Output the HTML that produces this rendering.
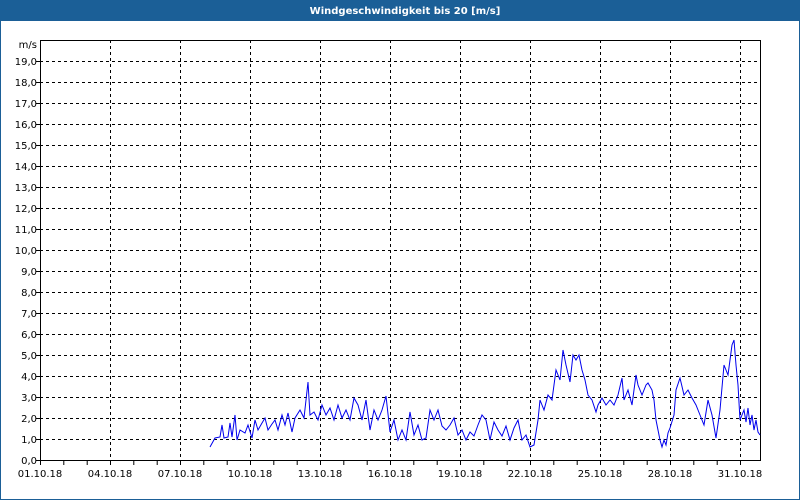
<!DOCTYPE html>
<html><head><meta charset="utf-8"><style>
html,body{margin:0;padding:0;background:#fff}
svg{display:block}
text{font-family:"DejaVu Sans","Liberation Sans",sans-serif;font-size:10px;fill:#000}
</style></head><body>
<svg width="800" height="500" xmlns="http://www.w3.org/2000/svg">
<rect x="0" y="0" width="800" height="500" fill="#fff"/>
<rect x="0" y="0" width="800" height="21" fill="#1b5f97"/>
<rect x="0.5" y="20.5" width="799" height="479" fill="none" stroke="#1b5f97"/>
<text x="405" y="14" text-anchor="middle" style="fill:#fff;font-weight:bold;font-size:10px">Windgeschwindigkeit bis 20 [m/s]</text>
<g stroke="#000" stroke-dasharray="3,3" stroke-width="1">
<path d="M40 61.5H760M40 82.5H760M40 103.5H760M40 124.5H760M40 145.5H760M40 166.5H760M40 187.5H760M40 208.5H760M40 229.5H760M40 250.5H760M40 271.5H760M40 292.5H760M40 313.5H760M40 334.5H760M40 355.5H760M40 376.5H760M40 397.5H760M40 418.5H760M40 439.5H760"/>
<path d="M110.5 40V460M180.5 40V460M250.5 40V460M320.5 40V460M390.5 40V460M460.5 40V460M530.5 40V460M600.5 40V460M670.5 40V460M740.5 40V460"/>
</g>
<rect x="40.5" y="40.5" width="720" height="420" fill="none" stroke="#000"/>
<g stroke="#000">
<path d="M40.5 461V465M63.8 461V465M87.2 461V465M110.5 461V465M133.8 461V465M157.2 461V465M180.5 461V465M203.8 461V465M227.2 461V465M250.5 461V465M273.8 461V465M297.2 461V465M320.5 461V465M343.8 461V465M367.2 461V465M390.5 461V465M413.8 461V465M437.2 461V465M460.5 461V465M483.8 461V465M507.2 461V465M530.5 461V465M553.8 461V465M577.2 461V465M600.5 461V465M623.8 461V465M647.2 461V465M670.5 461V465M693.8 461V465M717.2 461V465M740.5 461V465"/>
<path d="M36 61.5H40M36 82.5H40M36 103.5H40M36 124.5H40M36 145.5H40M36 166.5H40M36 187.5H40M36 208.5H40M36 229.5H40M36 250.5H40M36 271.5H40M36 292.5H40M36 313.5H40M36 334.5H40M36 355.5H40M36 376.5H40M36 397.5H40M36 418.5H40M36 439.5H40M36 460.5H40"/>
</g>
<g text-anchor="end">
<text x="37" y="48">m/s</text>
<text x="37" y="65">19,0</text><text x="37" y="86">18,0</text><text x="37" y="107">17,0</text><text x="37" y="128">16,0</text><text x="37" y="149">15,0</text><text x="37" y="170">14,0</text><text x="37" y="191">13,0</text><text x="37" y="212">12,0</text><text x="37" y="233">11,0</text><text x="37" y="254">10,0</text><text x="37" y="275">9,0</text><text x="37" y="296">8,0</text><text x="37" y="317">7,0</text><text x="37" y="338">6,0</text><text x="37" y="359">5,0</text><text x="37" y="380">4,0</text><text x="37" y="401">3,0</text><text x="37" y="422">2,0</text><text x="37" y="443">1,0</text><text x="37" y="464">0,0</text>
</g>
<g text-anchor="middle">
<text x="40" y="477">01.10.18</text><text x="110" y="477">04.10.18</text><text x="180" y="477">07.10.18</text><text x="250" y="477">10.10.18</text><text x="320" y="477">13.10.18</text><text x="390" y="477">16.10.18</text><text x="460" y="477">19.10.18</text><text x="530" y="477">22.10.18</text><text x="600" y="477">25.10.18</text><text x="670" y="477">28.10.18</text><text x="740" y="477">31.10.18</text>
</g>
<polyline fill="none" stroke="#0000ee" stroke-width="1" points="210,447 215,438 220,437 222,425 224,438 228,437 230,423 232,437 235,415 237,440 240,430 245,433 248,425 252,438 255,420 258,430 262,423 265,418 268,430 272,424 275,420 278,430 282,415 285,425 288,413 292,432 295,418 300,410 304,418 308,382 310,415 314,412 318,420 322,405 326,415 330,408 334,420 338,405 342,418 346,410 350,420 354,398 358,405 362,420 366,400 370,430 374,410 378,420 382,410 386,396 390,432 394,420 398,440 402,430 406,440 410,412 414,435 418,425 422,440 426,438 430,410 434,420 438,410 442,426 446,430 450,425 454,418 458,435 462,430 466,440 470,432 474,436 478,425 482,415 486,420 490,440 494,422 498,430 502,436 506,426 510,440 514,428 518,420 522,440 526,435 530,447 534,445 538,420 540,400 544,410 548,395 552,400 556,370 560,380 563,350 566,365 570,382 573,355 576,360 579,355 582,370 585,380 588,395 592,400 596,412 598,405 602,398 606,405 610,400 614,405 618,395 622,378 624,400 628,390 632,405 636,375 638,385 642,395 646,385 648,383 652,390 654,400 656,420 658,430 660,440 662,447 664,440 666,445 668,433 670,428 674,415 676,390 680,378 684,395 688,390 692,398 696,405 700,415 704,425 708,400 712,415 716,438 720,410 724,365 726,370 728,375 730,360 732,345 734,340 736,365 738,385 740,420 742,415 744,410 746,422 748,408 750,425 752,415 754,430 756,420 758,432 760,435"/>
</svg>
</body></html>
